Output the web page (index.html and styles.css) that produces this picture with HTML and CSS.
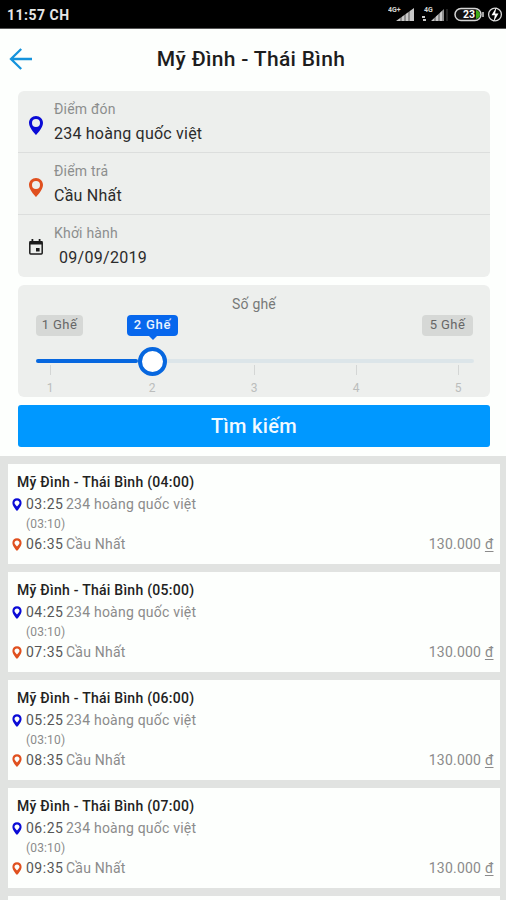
FILE: index.html
```html
<!DOCTYPE html>
<html lang="vi">
<head>
<meta charset="utf-8">
<title>Mỹ Đình - Thái Bình</title>
<link rel="stylesheet" href="styles.css">
</head>
<body>
<svg class="defs" width="0" height="0" aria-hidden="true">
  <symbol id="pin" viewBox="0 0 14 19"><path fill="currentColor" fill-rule="evenodd" d="M7 0C3.100 0 0 3.100 0 7c0 5.100 7 12 7 12s7-6.900 7-12c0-3.900-3.100-7-7-7zm0 2.900a4 4 0 1 1 0 8 4 4 0 0 1 0-8z"/></symbol>
  <symbol id="pin-small" viewBox="0 0 10 13"><path fill="currentColor" fill-rule="evenodd" d="M5 .3C2.200.3.400 2.300.400 5c0 3.500 4.600 8 4.600 8s4.600-4.500 4.600-8C9.600 2.300 7.800.3 5 .3zm0 2.100c1.500 0 2.500 1 2.500 2.300C7.500 6 6.300 7 5 8.400 3.700 7 2.500 6 2.500 4.700c0-1.300 1-2.300 2.500-2.300z"/></symbol>
</svg>
<header class="status">
  <span class="clock">11:57 CH</span>
  <svg class="indicators" width="116" height="22" viewBox="0 0 116 22">
    <g fill="#c9c9c9">
      <path d="M8 17L26 4v13zM43 17L56 5v12z"/>
      <path d="M34 12h3v2h-3zM35 15h3v2h-3z"/>
    </g>
    <path d="M13 9v9M17 6v12M21 4v14M47 9v9M51 6v12M55 4v14" stroke="#000" stroke-width=".6"/>
    <path d="M59 5v12" stroke="#444"/>
    <text class="net" x="0" y="8">4G+</text>
    <text class="net" x="36" y="8">4G</text>
    <rect x="67" y="4.500" width="26" height="12" rx="6" fill="#111" stroke="#d5d5d5" stroke-width="1.500"/>
    <path d="M88 6v9c3-1 4-2.500 4-4.500S91 7 88 6z" fill="#3caa18"/>
    <path d="M95 8v5" stroke="#d5d5d5" stroke-width="1.500"/>
    <text class="charge" x="75" y="14">23</text>
    <circle cx="107" cy="10.500" r="6.400" fill="none" stroke="#d5d5d5" stroke-width="1.300"/>
    <path d="M108.500 3l-5 8.300h3.300L105.500 18l5-8.500h-3.400z" fill="#fff"/>
  </svg>
</header>
<main>
  <div class="titlebar">
    <svg class="back" width="24" height="24" viewBox="0 0 24 24"><path d="M12.200 2L2 12l10.200 10M2 12h21" fill="none" stroke="#1593dc" stroke-width="2.300"/></svg>
    <h1>Mỹ Đình - Thái Bình</h1>
  </div>
  <section class="fields">
    <div class="field">
      <svg class="field-icon blue" width="14" height="19"><use href="#pin"/></svg>
      <div><div class="label">Điểm đón</div><div class="value">234 hoàng quốc việt</div></div>
    </div>
    <div class="field">
      <svg class="field-icon orange" width="14" height="19"><use href="#pin"/></svg>
      <div><div class="label">Điểm trả</div><div class="value dest">Cầu Nhất</div></div>
    </div>
    <div class="field">
      <svg class="field-icon" width="14" height="17" viewBox="0 0 14 17"><path d="M1.700 3h10.600c.5 0 .9.400.9.900v10.200c0 .5-.4.900-.9.900H1.700c-.5 0-.9-.4-.9-.9V3.900c0-.5.4-.9.900-.9z" fill="none" stroke="#1c1c1c" stroke-width="1.500"/><path d="M.5 2h13v3.500H.5zM2.500 0h1.800v3H2.500zM9.700 0h1.800v3H9.700zM7 9h3.600v3.600H7z" fill="#1c1c1c"/></svg>
      <div><div class="label">Khởi hành</div><div class="value date">09/09/2019</div></div>
    </div>
  </section>
  <section class="seats">
    <div class="seats-title">Số ghế</div>
    <div class="bounds"><span class="chip low">1 Ghế</span><span class="chip high">5 Ghế</span></div>
    <div class="track"><div class="fill"></div><div class="knob"><span class="chip current">2 Ghế</span></div></div>
    <div class="ticks"><span>1</span><span>2</span><span>3</span><span>4</span><span>5</span></div>
  </section>
  <button class="search"><span>Tìm kiếm</span></button>
</main>
<section class="trips">
  <article class="trip">
    <h2>Mỹ Đình - Thái Bình (04:00)</h2>
    <div class="stop"><svg class="blue" width="10" height="13"><use href="#pin-small"/></svg><b>03:25</b><span class="from">234 hoàng quốc việt</span></div>
    <div class="duration"><span>(03:10)</span></div>
    <div class="stop"><svg class="orange" width="10" height="13"><use href="#pin-small"/></svg><b>06:35</b><span class="to">Cầu Nhất</span><span class="price">130.000 <u>đ</u></span></div>
  </article>
  <article class="trip">
    <h2>Mỹ Đình - Thái Bình (05:00)</h2>
    <div class="stop"><svg class="blue" width="10" height="13"><use href="#pin-small"/></svg><b>04:25</b><span class="from">234 hoàng quốc việt</span></div>
    <div class="duration"><span>(03:10)</span></div>
    <div class="stop"><svg class="orange" width="10" height="13"><use href="#pin-small"/></svg><b>07:35</b><span class="to">Cầu Nhất</span><span class="price">130.000 <u>đ</u></span></div>
  </article>
  <article class="trip">
    <h2>Mỹ Đình - Thái Bình (06:00)</h2>
    <div class="stop"><svg class="blue" width="10" height="13"><use href="#pin-small"/></svg><b>05:25</b><span class="from">234 hoàng quốc việt</span></div>
    <div class="duration"><span>(03:10)</span></div>
    <div class="stop"><svg class="orange" width="10" height="13"><use href="#pin-small"/></svg><b>08:35</b><span class="to">Cầu Nhất</span><span class="price">130.000 <u>đ</u></span></div>
  </article>
  <article class="trip">
    <h2>Mỹ Đình - Thái Bình (07:00)</h2>
    <div class="stop"><svg class="blue" width="10" height="13"><use href="#pin-small"/></svg><b>06:25</b><span class="from">234 hoàng quốc việt</span></div>
    <div class="duration"><span>(03:10)</span></div>
    <div class="stop"><svg class="orange" width="10" height="13"><use href="#pin-small"/></svg><b>09:35</b><span class="to">Cầu Nhất</span><span class="price">130.000 <u>đ</u></span></div>
  </article>
  <article class="trip"></article>
</section>
</body>
</html>
```
FILE: styles.css
```css
* { box-sizing: border-box; }
body { margin: 0; height: 900px; overflow: hidden; background: #fdfffd; color: #222; font-family: Roboto, "Noto Sans", sans-serif; white-space: nowrap; }
svg { display: block; flex: none; }
.defs { position: absolute; }
.blue { color: #0b0bd6; }
.orange { color: #e0501f; }

.status { display: flex; justify-content: space-between; align-items: center; height: 29px; padding: 2px 0 0 7px; background: #000; border-bottom: 1px solid #555; color: #e6e6e6; }
.clock { font-size: 14px; font-weight: 700; line-height: 20px; letter-spacing: .5px; }
.indicators { margin-right: 2px; }
.net { font-size: 7px; font-weight: 700; fill: #d5d5d5; }
.charge { font-size: 10.500px; font-weight: 700; fill: #fff; }

main { height: 427px; padding: 0 16px 0 18px; }
.titlebar { display: flex; align-items: center; height: 62px; margin-left: -9px; padding-bottom: 2px; }
h1 { flex: 1; margin: 0 21px 0 0; text-align: center; font-size: 21px; font-weight: 500; line-height: 30px; letter-spacing: .32px; color: #1d1d1d; }

.fields { height: 186px; background: #edefed; border-radius: 6px; overflow: hidden; }
.field { display: flex; align-items: center; height: 62px; padding: 2px 0 0 11px; gap: 11px; border-bottom: 1px solid #dcdedd; }
.field:last-child { border: 0; padding-top: 0; }
.field-icon { margin-top: 6px; }
.field:last-child .field-icon { margin-top: 3px; }
.label { font-size: 14px; line-height: 20px; letter-spacing: .2px; color: #8c8e8d; }
.value { font-size: 16px; line-height: 24px; margin-top: 3px; letter-spacing: .22px; color: #2b2b2b; }
.date { padding-left: 5px; letter-spacing: .3px; }

.seats { height: 112px; margin-top: 8px; padding: 9px 16px 0 18px; background: #edefed; border-radius: 6px; }
.seats-title { text-align: center; margin-right: 2px; font-size: 14px; line-height: 20px; letter-spacing: .2px; color: #777978; }
.bounds { display: flex; justify-content: space-between; padding: 1px 1px 0 0; }
.chip { height: 21px; padding: 0 3px; border-radius: 4px; background: #d6d8d6; color: #666; font-size: 13px; line-height: 20px; letter-spacing: .4px; text-align: center; }
.low { width: 47px; }
.high { width: 51px; }
.track { position: relative; display: flex; align-items: center; height: 4px; margin-top: 23px; background: #dce5e9; border-radius: 2px; }
.fill { width: 102px; height: 4px; background: #0767df; border-radius: 2px; }
.knob { position: relative; flex: none; width: 29px; height: 29px; border: 4px solid #0767df; border-radius: 50%; background: #fff; }
.current { position: absolute; left: -15px; top: -36px; width: 51px; background: #0767ed; color: #e9f3ff; font-weight: 500; letter-spacing: .8px; }
.current::after { content: ""; position: absolute; left: 21.500px; top: 21px; border: 4px solid transparent; border-top-color: #0767ed; border-bottom: 0; }
.ticks { display: flex; justify-content: space-between; padding: 2px 16px 0 14px; font-size: 12px; line-height: 15px; color: #bbbdbc; }
.ticks span { display: flex; flex-direction: column; align-items: center; width: 0; }
.ticks span::before { content: ""; width: 1px; height: 10px; margin-bottom: 6px; background: #d4d6d5; }
.ticks span:nth-child(2)::before { visibility: hidden; }

.search { display: block; width: 100%; height: 42px; margin-top: 8px; padding: 0; border: 0; border-radius: 3px; background: #0098ff; color: #f2faff; font: 500 20px/42px Roboto, sans-serif; letter-spacing: .3px; }

.trips { display: flex; flex-direction: column; gap: 8px; height: 444px; padding: 8px 6.500px 0 8px; background: #e1e3e1; overflow: hidden; }
.trip { flex: none; height: 100px; padding: 9px 6px 0 4px; background: #fdfffd; }
h2 { margin: 0 0 0 5px; font-size: 14px; font-weight: 500; line-height: 19px; letter-spacing: .26px; color: #222; }
.stop { display: flex; align-items: center; height: 24px; font-size: 14px; line-height: 24px; letter-spacing: .22px; color: #8b8b8b; }
.stop b { margin-left: 4px; width: 40px; font-weight: 400; letter-spacing: .5px; color: #565656; }
.duration { height: 16px; padding-left: 14px; font-size: 12px; line-height: 17px; letter-spacing: .15px; color: #8b8b8b; }
.price { margin-left: auto; }
.price u { text-underline-offset: 2px; }
```
